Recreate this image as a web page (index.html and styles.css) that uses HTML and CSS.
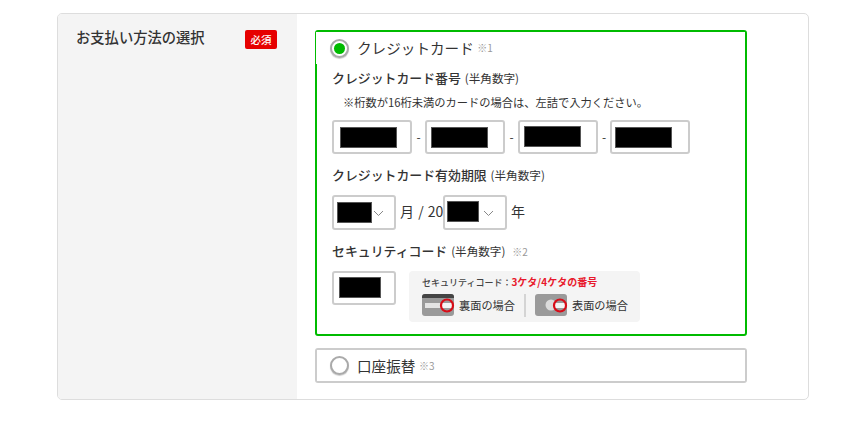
FILE: index.html
```html
<!DOCTYPE html>
<html lang="ja">
<head>
<meta charset="utf-8">
<title>お支払い方法の選択</title>
<link rel="stylesheet" href="styles.css">
</head>
<body>
<section class="card">
  <div class="side">
    <h2 class="side-title">お支払い方法の選択</h2>
    <span class="badge">必須</span>
  </div>
  <div class="main">
    <div class="option option-on">
      <div class="option-label">
        <span class="radio radio-on"></span>
        <span class="option-name">クレジットカード</span>
        <span class="mark">※1</span>
      </div>
      <div class="fields">
        <div class="field-title title-number">クレジットカード番号 <small>(半角数字)</small></div>
        <p class="note">※桁数が16桁未満のカードの場合は、左詰で入力ください。</p>
        <div class="number-row">
          <span class="input input-num"><i class="mask mask-num"></i></span>
          <span class="dash">-</span>
          <span class="input input-num input-b"><i class="mask mask-num"></i></span>
          <span class="dash">-</span>
          <span class="input input-num input-b input-up"><i class="mask mask-num"></i></span>
          <span class="dash dash-last">-</span>
          <span class="input input-num input-c"><i class="mask mask-num"></i></span>
        </div>
        <div class="field-title title-expiry">クレジットカード有効期限 <small>(半角数字)</small></div>
        <div class="expiry-row">
          <span class="select select-month"><i class="mask mask-month"></i><svg class="chev" width="11" height="7" viewBox="0 0 11 7"><path d="M1 1l4.5 4.5L10 1" fill="none" stroke="#888" stroke-width="1"/></svg></span>
          <span class="unit unit-month">月 / 20</span>
          <span class="select select-year"><i class="mask mask-year"></i><svg class="chev chev-year" width="11" height="7" viewBox="0 0 11 7"><path d="M1 1l4.5 4.5L10 1" fill="none" stroke="#888" stroke-width="1"/></svg></span>
          <span class="unit unit-year">年</span>
        </div>
        <div class="field-title title-code">セキュリティコード <small>(半角数字)</small> <span class="mark mark-code">※2</span></div>
        <div class="code-row">
          <span class="input input-code"><i class="mask mask-code-box"></i></span>
          <div class="help">
            <div class="help-title">セキュリティコード：<em>3ケタ/4ケタの番号</em></div>
            <div class="help-cards">
              <div class="help-card">
                <svg width="34" height="24" viewBox="0 0 34 24"><rect x="0" y="1" width="32" height="22" rx="3" fill="#9a9a9a"/><path d="M0 4a3 3 0 0 1 3-3h26a3 3 0 0 1 3 3v1H0z" fill="#444"/><rect x="3" y="10" width="17" height="5" fill="#e4e4e4"/><rect x="20" y="10" width="10" height="5" fill="#f4f4f4"/><circle cx="25" cy="12.500" r="6" fill="none" stroke="#d80c18" stroke-width="2.200"/></svg>
                <span>裏面の場合</span>
              </div>
              <span class="help-sep"></span>
              <div class="help-card">
                <svg width="34" height="24" viewBox="0 0 34 24"><rect x="0" y="1" width="32" height="22" rx="3" fill="#9a9a9a"/><circle cx="16" cy="12" r="5.500" fill="#dcdcdc"/><rect x="20" y="10" width="10" height="5" fill="#f4f4f4"/><circle cx="25" cy="12.500" r="6" fill="none" stroke="#d80c18" stroke-width="2.200"/></svg>
                <span>表面の場合</span>
              </div>
            </div>
          </div>
        </div>
      </div>
    </div>
    <div class="option option-off">
      <div class="option-label option-label-off">
        <span class="radio"></span>
        <span class="option-name">口座振替</span>
        <span class="mark">※3</span>
      </div>
    </div>
  </div>
</section>
</body>
</html>
```
FILE: styles.css
```css
* { box-sizing: border-box; }
html, body { margin: 0; padding: 0; background: #fff; }
body {
  font-family: "Noto Sans CJK JP", "Liberation Sans", sans-serif;
  color: #333;
}
.card {
  display: flex;
  width: 752px;
  height: 387px;
  margin: 13px 0 0 57px;
  border: 1px solid #ddd;
  border-radius: 5px;
  overflow: hidden;
}
.side {
  display: flex;
  align-items: flex-start;
  justify-content: space-between;
  width: 239px;
  padding: 16px 20px 0 18px;
  background: #f4f4f4;
}
.side-title {
  margin: -2px 0 0;
  font-size: 14.300px;
  font-weight: 500;
  line-height: 18px;
}
.badge {
  width: 32px;
  height: 19px;
  border-radius: 2px;
  background: #e60000;
  color: #fff;
  font-size: 10.500px;
  font-weight: 500;
  line-height: 19px;
  text-align: center;
}
.main {
  display: flex;
  flex-direction: column;
  gap: 12px;
  padding: 16px 0 0 18px;
}
.option {
  width: 432px;
  border-radius: 3px;
}
.option-on {
  height: 306px;
  border: 2px solid #00bb00;
}
.option-off {
  height: 35px;
  border: 2px solid #ccc;
}
.option-label {
  display: flex;
  align-items: center;
  height: 32px;
  margin-left: -1px;
  padding-left: 14px;
  background: #fff;
}
.option-label-off {
  height: 31px;
  margin-left: 0;
  padding-left: 13px;
}
.radio {
  flex: none;
  position: relative;
  width: 19px;
  height: 19px;
  margin-right: 8px;
  border: 2px solid #aaa;
  border-radius: 50%;
  background: #fff;
  box-shadow: 0 1px 1px rgba(0, 0, 0, .2);
}
.radio-on::after {
  content: "";
  position: absolute;
  top: 2px;
  left: 2px;
  width: 11px;
  height: 11px;
  border-radius: 50%;
  background: #00bb00;
}
.option-name {
  font-size: 14.600px;
  line-height: 20px;
}
.mark {
  margin-left: 3.500px;
  color: #999;
  font-size: 10px;
  line-height: 14px;
}
.fields { padding-left: 15px; }
.field-title {
  font-size: 12.900px;
  font-weight: 500;
  line-height: 18px;
  word-spacing: 1px;
}
.field-title small {
  font-size: 11.600px;
  font-weight: 400;
}
.title-number { margin-top: 5px; }
.title-expiry { margin-top: 12px; }
.title-code { margin-top: 12px; }
.mark-code { margin-left: 3px; font-weight: 400; }
.note {
  margin: 7px 0 10px 11px;
  font-size: 11.250px;
  line-height: 16px;
}
.number-row, .expiry-row, .code-row { display: flex; align-items: flex-start; }
.input, .select {
  display: flex;
  border: 2px solid #ccc;
  border-radius: 3px;
  background: #fff;
}
.input-num { width: 80px; height: 34px; padding: 5px 0 0 6px; }
.input-b { padding-left: 4px; }
.input-up { padding-top: 4px; }
.input-c { padding-left: 3px; }
.mask {
  display: block;
  background: #000;
  outline: 1px solid #555;
  outline-offset: -1px;
}
.mask-num { width: 57px; height: 21px; }
.dash {
  width: 13px;
  font-size: 12px;
  line-height: 34px;
  text-align: center;
}
.dash-last { width: 12px; }
.expiry-row { margin-top: 11px; }
.select { width: 64px; height: 35px; padding: 5px 0 0 3px; }
.mask-month { width: 35px; height: 21px; }
.mask-year { width: 32px; height: 21px; margin-top: -1px; margin-left: -1px; }
.chev { margin: 8px 0 0 1px; }
.chev-year { margin-left: 4px; }
.unit { font-size: 14px; line-height: 33px; }
.unit-month { width: 47px; padding-left: 4px; white-space: nowrap; word-spacing: 1px; }
.unit-year { padding-left: 4px; }
.code-row { margin-top: 11px; }
.input-code { width: 64px; height: 34px; padding: 4px 0 0 5px; }
.mask-code-box { width: 42px; height: 21px; }
.help {
  width: 231px;
  height: 51px;
  margin-left: 13px;
  padding: 4px 0 0 13px;
  border-radius: 4px;
  background: #f4f4f4;
}
.help-title {
  font-size: 9px;
  font-weight: 500;
  line-height: 13px;
  color: #444;
}
.help-title em { color: #e8192c; font-size: 10px; font-weight: 700; font-style: normal; }
.help-cards {
  display: flex;
  align-items: center;
  margin-top: 4px;
}
.help-card {
  display: flex;
  align-items: center;
  font-size: 11.200px;
  line-height: 24px;
}
.help-card svg { margin-right: 3px; }
.help-sep {
  width: 2px;
  height: 23px;
  margin: 0 9px;
  background: #d4d4d4;
}
```
